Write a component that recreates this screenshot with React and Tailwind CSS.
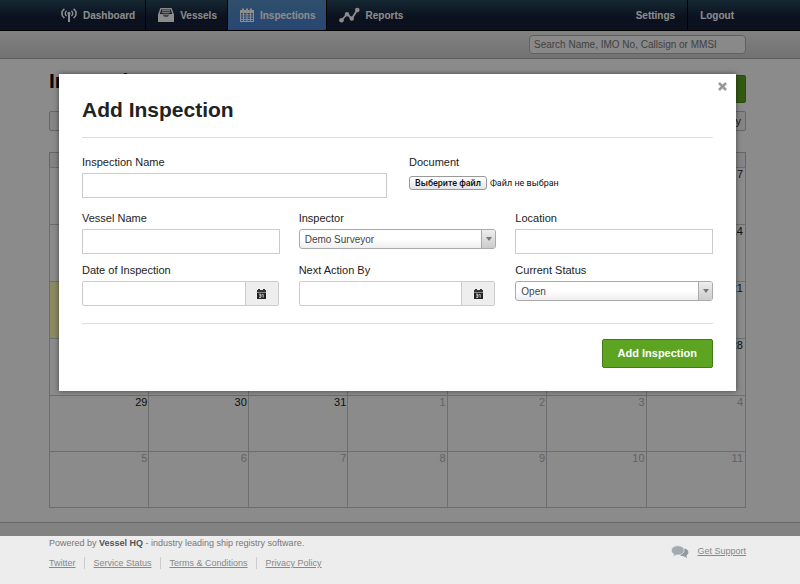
import React from "react";

const DashboardIcon = () => (
  <svg width="16" height="16" viewBox="0 0 16 16" fill="none" stroke="currentColor" strokeWidth="1.6">
    <path d="M3.4 1.8C0 4.4 0 8.4 3.4 11M12.6 1.8C16 4.4 16 8.4 12.600 11" />
    <path d="M5.6 3.8C3.8 5.200 3.8 7.600 5.600 9M10.400 3.800C12.200 5.200 12.200 7.600 10.400 9" strokeWidth="1.4" />
    <circle cx="8" cy="6.4" r="1.6" fill="currentColor" stroke="none" />
    <path d="M8 6V15" strokeWidth="2" />
  </svg>
);

const VesselsIcon = () => (
  <svg width="16" height="16" viewBox="0 0 16 16" fill="currentColor">
    <path fillRule="evenodd" d="M2.4 1H13.6L16 7.400V15H0V7.400ZM3.400 2.200L1.800 7H4.600L6 9.500H10L11.400 7H14.200L12.600 2.200Z" />
    <path d="M4 2.600H12V4H4ZM3.600 4.600H12.400V6H3.600ZM4.600 6.600H11.400L10.400 8.600H5.600Z" opacity="0.75" />
  </svg>
);

const InspectionsIcon = () => (
  <svg width="14" height="14" viewBox="0 0 14 14" fill="currentColor">
    <path
      fillRule="evenodd"
      d="M0 2H2V0.5H4V2H6V0.5H8V2H10V0.5H12V2H14V14H0ZM1 5V6.4H3V5ZM4 5V6.4H6.5V5ZM7.5 5V6.4H10V5ZM11 5V6.4H13V5ZM1 7.3V8.7H3V7.3ZM4 7.3V8.7H6.5V7.3ZM7.5 7.3V8.7H10V7.3ZM11 7.3V8.7H13V7.3ZM1 9.6V11H3V9.6ZM4 9.6V11H6.5V9.6ZM7.5 9.6V11H10V9.6ZM11 9.6V11H13V9.6ZM1 11.9V13.1H3V11.9ZM4 11.9V13.1H6.5V11.9ZM7.5 11.9V13.1H10V11.9ZM11 11.9V13.1H13V11.9Z"
    />
  </svg>
);

const ReportsIcon = () => (
  <svg width="21" height="16" viewBox="0 0 21 16" fill="currentColor">
    <path d="M2.5 13.5L8 7L12.8 11.5L18.3 3" fill="none" stroke="currentColor" strokeWidth="1.8" />
    <circle cx="2.5" cy="13.2" r="2.3" />
    <circle cx="8" cy="7.2" r="2.2" />
    <circle cx="12.8" cy="11.6" r="2.2" />
    <circle cx="18.3" cy="3" r="2.3" />
  </svg>
);

const CalendarGlyph = () => (
  <svg width="9" height="10" viewBox="0 0 9 10">
    <path d="M1 0H3V1H6V0H8V1H9V3H0V1H1Z" fill="#333" />
    <path d="M0 3.5H9V10H0Z" fill="#222" />
    <path d="M2 5.2H4V8.4H2M2.4 6.8H4M5.2 5.4H6.2V8.6" fill="none" stroke="#eee" strokeWidth="0.8" />
  </svg>
);

const ChatIcon = () => (
  <svg width="18" height="14" viewBox="0 0 18 14">
    <path d="M12 3.6C15.4 3.6 17.4 5.2 17.4 7.3C17.4 8.6 16.6 9.7 15.4 10.4L16.2 13L12.6 11.2C9.6 11.2 8 9.4 8 7.4Z" fill="#8f999f" />
    <path d="M6.8 0.8C10.6 0.8 13.2 2.8 13.2 5.4C13.2 8 10.6 10 6.8 10C6.3 10 5.8 10 5.3 9.9L2 12L2.8 9C1.2 8.200 0.4 6.900 0.4 5.4C0.400 2.800 3 0.800 6.800 0.800Z" fill="#a3abb0" stroke="#ededed" strokeWidth="0.7" />
  </svg>
);

const weeks = [
  [1, 2, 3, 4, 5, 6, 7],
  [8, 9, 10, 11, 12, 13, 14],
  [15, 16, 17, 18, 19, 20, 21],
  [22, 23, 24, 25, 26, 27, 28],
  [29, 30, 31, 1, 2, 3, 4],
  [5, 6, 7, 8, 9, 10, 11],
];
const dayNames = ["Sun", "Mon", "Tue", "Wed", "Thu", "Fri", "Sat"];

const NavItem = ({ icon, label, active, last }) => (
  <a
    href="#"
    className={
      "flex items-center gap-1.5 pr-2.5 pl-3 text-[10px] font-bold text-white " +
      (active ? "bg-linear-to-b from-[#5590c4] to-[#4a80d2] " : "") +
      (last ? "" : "border-r border-black")
    }
  >
    {icon}
    <span>{label}</span>
  </a>
);

const fieldBox = "h-[25px] w-full min-w-0 border border-[#ccc] bg-white px-1.5 text-[10px] text-[#444] outline-none";

const Field = ({ id, label, children }) => (
  <div className="flex flex-col gap-[2px]">
    <label htmlFor={id} className="text-[11px] leading-[17px] text-[#222]">{label}</label>
    {children}
  </div>
);

const SelectBox = ({ id, value }) => (
  <div className="relative h-[20px]">
    <select
      id={id}
      defaultValue={value}
      className="block h-full w-full appearance-none rounded-[3px] border border-[#aaa] bg-linear-to-b from-white from-50% to-[#eee] pr-5 pl-[5px] text-[10px] text-[#444] outline-none"
    >
      <option>{value}</option>
    </select>
    <span className="pointer-events-none absolute inset-y-px right-px flex w-[14px] items-center justify-center rounded-r-[2px] border-l border-[#aaa] bg-linear-to-b from-[#eee] to-[#ccc]">
      <svg width="6" height="4" viewBox="0 0 6 4"><path d="M0 0H6L3 4Z" fill="#777" /></svg>
    </span>
  </div>
);

const DateBox = ({ id }) => (
  <div className="mr-px flex">
    <input id={id} type="text" className={fieldBox + " rounded-l-[2px]"} />
    <button
      type="button"
      aria-label="Pick a date"
      className="flex w-[33px] shrink-0 items-center justify-center rounded-r-[2px] border border-l-0 border-[#ccc] bg-[#eee]"
    >
      <CalendarGlyph />
    </button>
  </div>
);

const footerLinks = ["Twitter", "Service Status", "Terms & Conditions", "Privacy Policy"];

export default function App() {
  return (
    <div className="relative min-h-screen bg-[#ededed] font-['Liberation_Sans',Arial,sans-serif]">
      <header>
        <nav className="flex h-[31px] justify-between border-b border-black bg-linear-to-b from-[#28495d] to-[#141f38] to-60% pr-[54px] pl-[49px]">
          <div className="flex">
            <NavItem icon={<DashboardIcon />} label="Dashboard" />
            <NavItem icon={<VesselsIcon />} label="Vessels" />
            <NavItem icon={<InspectionsIcon />} label="Inspections" active />
            <NavItem icon={<ReportsIcon />} label="Reports" last />
          </div>
          <div className="flex text-[10px] font-bold text-white">
            <a href="#" className="flex items-center border-r border-black px-3">Settings</a>
            <a href="#" className="flex items-center px-3">Logout</a>
          </div>
        </nav>
        <div className="flex h-[28px] items-center justify-end border-b border-[#aaa] bg-linear-to-b from-[#ededed] to-[#d0d0d0] pr-[54px]">
          <input
            type="text"
            aria-label="Search"
            placeholder="Search Name, IMO No, Callsign or MMSI"
            className="h-[19px] w-[217px] rounded-[4px] border border-[#b0b0b0] bg-[#fafafa] px-1 text-[10px] outline-none placeholder:text-[#777]"
          />
        </div>
      </header>

      <main className="border-b border-[#bbb] bg-[#fdfdfd] pt-2.5 pr-[54px] pb-[14px] pl-[49px]">
        <div className="flex h-[42px] items-start justify-between">
          <h1 className="text-[21px] leading-6 font-bold text-[#111]">Inspections</h1>
          <button type="button" aria-label="Add Inspection" className="mt-1.5 h-[28px] w-[112px] rounded-[2px] border border-[#4c8a1d] bg-[#5da423]" />
        </div>
        <div className="flex justify-between">
          <button type="button" className="h-[20px] rounded-[2px] border border-[#bbb] bg-[#f3f3f3] px-3 text-[11px] text-[#333]">Today</button>
          <button type="button" className="h-[20px] rounded-[2px] border border-[#bbb] bg-[#f3f3f3] px-1 text-[11px] text-[#333]">Day</button>
        </div>
        <table className="mt-[21px] w-full table-fixed border-collapse border border-[#bbb] text-[11px]">
          <thead>
            <tr className="h-[15px] bg-[#f0f0f0]">
              {dayNames.map((d) => (
                <th key={d} aria-label={d} className="p-0" />
              ))}
            </tr>
          </thead>
          <tbody>
            {weeks.map((week, w) => (
              <tr key={w} className={w < 4 ? "h-[57px]" : "h-[56px]"}>
                {week.map((day, d) => {
                  const other = (w === 4 && d > 2) || w === 5;
                  const today = w === 2 && d === 0;
                  return (
                    <td
                      key={d}
                      className={
                        "border border-[#c6c6c6] py-0 pl-0 text-right align-top leading-[13px] " +
                        (d === 6 ? "pr-[2px] " : "pr-px ") +
                        (other ? "text-[#b4b4b4] " : "text-[#222] ") +
                        (today ? "bg-[#fbfbb5]" : "")
                      }
                    >
                      {day}
                    </td>
                  );
                })}
              </tr>
            ))}
          </tbody>
        </table>
      </main>

      <footer className="flex justify-between pt-[13px] pr-[54px] pb-3 pl-[49px] text-[9px] text-[#888]">
        <div>
          <p className="leading-[14px] text-[#777]">
            Powered by <b className="text-[#555]">Vessel HQ</b> - industry leading ship registry software.
          </p>
          <ul className="mt-[7px] flex leading-3">
            {footerLinks.map((l, i) => (
              <li key={l} className={i ? "ml-2 border-l border-[#ccc] pl-[9px]" : ""}>
                <a href="#" className="underline">{l}</a>
              </li>
            ))}
          </ul>
        </div>
        <a href="#" className="mt-[9px] flex h-[14px] items-center gap-2">
          <ChatIcon />
          <span className="underline">Get Support</span>
        </a>
      </footer>

      <div className="absolute inset-x-0 top-0 h-[536px] bg-black/45" />

      <section
        role="dialog"
        aria-labelledby="dialog-title"
        className="absolute top-[74px] right-[64px] left-[59px] bg-white px-[23px] pb-[23px] shadow-[0_0_5px_rgba(0,0,0,0.5)]"
      >
        <button type="button" aria-label="Close" className="absolute top-[7px] right-[8px] flex p-px text-[#999]">
          <svg width="9" height="9" viewBox="0 0 9 9"><path d="M1 1L8 8M8 1L1 8" stroke="currentColor" strokeWidth="2.6" /></svg>
        </button>
        <h2 id="dialog-title" className="pt-[23px] pb-[14px] text-[21px] leading-[26px] font-bold text-[#222]">Add Inspection</h2>
        <form className="border-t border-[#ddd] pt-4">
          <div className="flex gap-[22px]">
            <div className="w-[305px]">
              <Field id="name" label="Inspection Name">
                <input id="name" type="text" className={fieldBox} />
              </Field>
            </div>
            <div className="flex flex-col gap-[5px]">
              <span className="text-[11px] leading-[17px] text-[#222]">Document</span>
              <label className="flex items-center gap-[3px] font-[Roboto,'Noto_Sans',sans-serif] text-[9px] leading-3 text-[#111]">
                <input type="file" aria-label="Document" className="sr-only" />
                <span className="rounded-[3px] border border-[#999] bg-linear-to-b from-white to-[#e4e4e4] px-[5px] font-medium">Выберите файл</span>
                <span>Файл не выбран</span>
              </label>
            </div>
          </div>
          <div className="mt-3 grid grid-cols-3 gap-x-[19px] gap-y-2">
            <Field id="vessel" label="Vessel Name">
              <input id="vessel" type="text" className={fieldBox} />
            </Field>
            <Field id="inspector" label="Inspector">
              <SelectBox id="inspector" value="Demo Surveyor" />
            </Field>
            <Field id="location" label="Location">
              <input id="location" type="text" className={fieldBox} />
            </Field>
            <Field id="date" label="Date of Inspection">
              <DateBox id="date" />
            </Field>
            <Field id="next" label="Next Action By">
              <DateBox id="next" />
            </Field>
            <Field id="status" label="Current Status">
              <SelectBox id="status" value="Open" />
            </Field>
          </div>
          <div className="mt-[17px] flex justify-end border-t border-[#ddd] pt-[15px]">
            <button type="submit" className="h-[29px] rounded-[2px] border border-[#457a1a] bg-[#5da423] px-[15px] text-[11px] font-bold text-white">
              Add Inspection
            </button>
          </div>
        </form>
      </section>
    </div>
  );
}
